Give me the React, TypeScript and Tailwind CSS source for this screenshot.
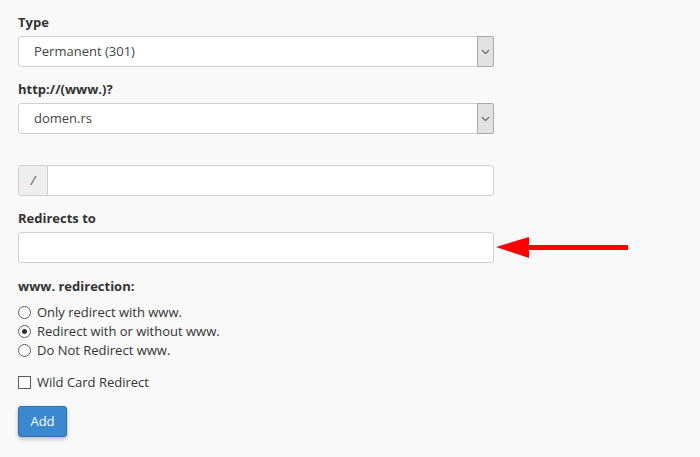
import React from "react";

function Chevron() {
  return (
    <svg width="9" height="6" viewBox="0 0 9 6" className="block">
      <path d="M1 1.2 L4.5 4.6 L8 1.2" fill="none" stroke="#555" strokeWidth="1.1" />
    </svg>
  );
}

function Select({ value }: { value: string }) {
  return (
    <div className="flex h-[31px] w-[476px] rounded-[3px] border border-[#cfcfcf] bg-white">
      <div className="flex flex-1 items-center pl-[15px] text-[13px] text-[#444]">{value}</div>
      <div className="flex w-[17px] items-center justify-center rounded-r-[2px] border-l border-[#a9a9a9] bg-[#e1e1e1] -my-px -mr-px border-y border-r">
        <Chevron />
      </div>
    </div>
  );
}

function Label({ children }: { children: React.ReactNode }) {
  return <div className="mb-[5px] h-[18px] text-[13px] font-bold leading-[18px] text-[#333]">{children}</div>;
}

function Radio({ checked, label }: { checked?: boolean; label: string }) {
  return (
    <div className="flex h-[19px] items-center gap-[6px]">
      <div className="flex h-[13px] w-[13px] items-center justify-center rounded-full border border-[#5c5c5c] bg-white">
        {checked && <div className="h-[5px] w-[5px] rounded-full bg-[#333]" />}
      </div>
      <span className="text-[13px] leading-[19px] text-[#333]">{label}</span>
    </div>
  );
}

export default function App() {
  return (
    <div
      className="relative min-h-[457px] w-[700px] bg-[#f9f9f9] pl-[18px] pt-[13px]"
      style={{ fontFamily: '"Open Sans", "Liberation Sans", sans-serif' }}
    >
      <Label>Type</Label>
      <Select value="Permanent (301)" />
      <div className="h-[13px]" />
      <Label>http://(www.)?</Label>
      <Select value="domen.rs" />
      <div className="h-[31px]" />
      <div className="flex h-[31px] w-[476px] rounded-[3px] border border-[#cfcfcf] bg-white">
        <div className="flex w-[29px] items-center justify-center rounded-l-[3px] border-r border-[#cfcfcf] bg-[#eeeeee] text-[13px] italic text-[#555]">
          /
        </div>
        <div className="flex-1" />
      </div>
      <div className="h-[13px]" />
      <Label>Redirects to</Label>
      <div className="h-[31px] w-[476px] rounded-[3px] border border-[#cfcfcf] bg-white" />
      <div className="h-[14px]" />
      <div className="h-[18px] text-[13px] font-bold leading-[18px] text-[#333]">www. redirection:</div>
      <div className="h-[8px]" />
      <Radio label="Only redirect with www." />
      <Radio checked label="Redirect with or without www." />
      <Radio label="Do Not Redirect www." />
      <div className="h-[13px]" />
      <div className="flex h-[19px] items-center gap-[6px]">
        <div className="h-[13px] w-[13px] border border-[#5c5c5c] bg-white" />
        <span className="text-[13px] leading-[19px] text-[#333]">Wild Card Redirect</span>
      </div>
      <div className="h-[14px]" />
      <button className="flex h-[31px] w-[49px] items-center justify-center rounded-[3px] border border-[#2c6fb0] bg-[#3a88d0] text-[13px] text-white shadow-[0_2px_4px_rgba(0,0,0,0.25)]">
        Add
      </button>

      <svg className="absolute left-[496px] top-[236px]" width="134" height="24" viewBox="0 0 134 24">
        <polygon points="0,11 33,1 33,22" fill="#ff0000" />
        <rect x="30" y="9" width="102" height="5" fill="#ff0000" />
      </svg>
    </div>
  );
}
